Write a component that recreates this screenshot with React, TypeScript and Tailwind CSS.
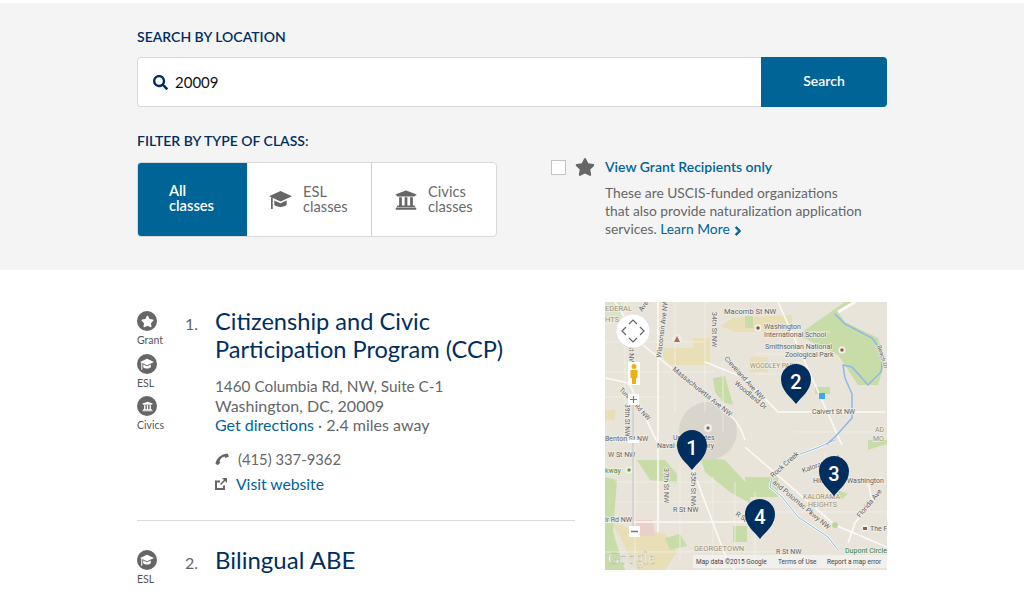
import { FaSearch, FaStar, FaUniversity, FaChevronRight } from "react-icons/fa";

const Label = ({ x, y, r, s = 7.5, c = "#5f5f5f", t }: { x: number; y: number; r?: number; s?: number; c?: string; t: string }) => (
  <text
    x={x}
    y={y}
    fontSize={s}
    fill={c}
    stroke="#f1eee6"
    strokeWidth={1.5}
    paintOrder="stroke"
    transform={r ? `rotate(${r} ${x} ${y})` : undefined}
  >
    {t}
  </text>
);

const Pin = ({ x, y, n }: { x: number; y: number; n: number }) => (
  <g transform={`translate(${x} ${y})`}>
    <path d="M0 40C-5 33 -15 27 -15 15C-15 6.700 -8 0 0 0C8 0 15 6.700 15 15C15 27 5 33 0 40Z" fill="#002f5f" />
    <text x={0} y={25} textAnchor="middle" fontSize={20} fontWeight={500} fill="#fff">
      {n}
    </text>
  </g>
);

const GradCap = ({ size, color = "#666" }: { size: number; color?: string }) => (
  <svg width={size} height={size} viewBox="0 0 24 24" className="shrink-0">
    <path d="M12 3L24 8.500L12 14L0 8.500Z" fill={color} />
    <path d="M5.500 13V17.500C8 20.500 16 20.500 18.500 17.500V13L12 16Z" fill={color} />
    <path d="M3 10V22" stroke={color} strokeWidth={1.8} />
  </svg>
);

const PhoneIcon = () => (
  <svg width={14} height={12} viewBox="0 0 14 12" className="mr-[9px] shrink-0">
    <path d="M0.500 11C1 6 5 1.500 12.500 0.500L14 3.500L10.500 5L9.500 3.500C7 4 5 6 4.500 8.500L5.500 9.500L3 12Z" fill="#666" />
  </svg>
);

const LinkIcon = () => (
  <svg width={12} height={12} viewBox="0 0 12 12" className="mr-[9px] shrink-0">
    <path d="M9 7.500V11H1V3.500H5" fill="none" stroke="#666" strokeWidth={2} />
    <path d="M5.500 6.500L10 2" stroke="#666" strokeWidth={1.6} />
    <path d="M7 0H12V5Z" fill="#666" />
  </svg>
);

const MapBox = () => (
  <svg width={282} height={268} viewBox="0 0 282 268" className="block shrink-0" style={{ fontFamily: "Roboto, sans-serif" }}>
    <rect width={282} height={268} fill="#e8e4da" />
    {/* tan blocks */}
    <path d="M58 46L88 46L88 36L105 36L105 63L65 63L58 56Z" fill="#e9dfb6" />
    <path d="M115 24L128 16L187 13L187 30L140 30L130 30Z" fill="#e9dfb6" />
    <path d="M145 55L163 55L163 70L145 70Z" fill="#e9dfb6" />
    <path d="M0 108L10 108L10 118L0 118Z" fill="#e9dfb6" />
    <path d="M8 222L60 232L72 250L60 268L30 268L18 240Z" fill="#e9dfb6" />
    <path d="M30 218L48 218L50 234L32 234Z" fill="#eacfca" />
    {/* parks */}
    <path d="M193 33L217 16L240 0L250 0L233 10L240 20L273 36L280 60L273 83L253 83L240 63L233 53L207 40Z" fill="#c8dca8" />
    <path d="M140 14L148 14L148 26L140 26Z" fill="#c8dca8" />
    <path d="M108 76L120 74L128 103L118 100L110 90Z" fill="#c8dca8" />
    <path d="M0 0L16 0L16 18L0 14Z" fill="#dbe3c6" />
    <path d="M32 158L60 158L72 172L72 181L45 178Z" fill="#c8dca8" />
    <path d="M95 155L120 158L145 185L145 201L125 190L100 170Z" fill="#c8dca8" />
    <path d="M0 175L12 178L8 230L20 268L0 268Z" fill="#c8dca8" />
    <path d="M140 175L173 175L173 195L142 195Z" fill="#c8dca8" />
    <path d="M128 224L142 224L142 240L128 240Z" fill="#c8dca8" />
    <path d="M60 236L75 232L82 244L65 248Z" fill="#c8dca8" />
    <path d="M210 85L225 85L225 92L210 92Z" fill="#c8dca8" />
    <path d="M263 138L282 138L282 142L263 148Z" fill="#c8dca8" />
    <path d="M230 187L243 192L236 198Z" fill="#c8dca8" />
    {/* grey campus */}
    <circle cx={103} cy={129} r={29} fill="#d9d4cc" />
    {/* streets */}
    <g fill="none" stroke="#f1efe8" strokeWidth={0.8}>
      <path d="M0 40H100M0 70H110M0 95H60M10 180H110M10 200H140M0 250H180M70 0V110M100 0V110M118 60V130M30 130V268M75 160V260M108 175V268M130 180V260M150 190V268" />
      <path d="M160 30H225M150 52H200M150 72H190M190 130H280M170 210H280M220 150V230M20 0V130" />
    </g>
    <g fill="none" stroke="#fbfaf6" strokeWidth={1.6}>
      <path d="M0 76L24 81L52 140" />
      <path d="M10 0L38 43L128 116C134 122 138 132 140 138" />
      <path d="M53 0L53 230" />
      <path d="M0 220L170 220" />
      <path d="M88 168L122 258L130 268" />
      <path d="M140 76L173 110L280 110" />
      <path d="M173 0L237 143" />
      <path d="M100 60L140 76" />
      <path d="M140 145L230 223L282 245" />
      <path d="M263 181L267 198L250 221L243 241" />
      <path d="M233 10L250 0" strokeWidth={3} />
      <path d="M230 138L212 146L187 155L168 171L165 185L177 195L193 215L223 235L233 248" strokeWidth={2.5} />
    </g>
    {/* creek */}
    <g fill="none" stroke="#8db7e8" strokeLinecap="round">
      <path d="M230 12L240 22L267 36C276 46 278 60 276 70L263 83L247 65L238 63L240 76L247 92L247 116L230 135L222 142" strokeWidth={1.5} />
      <path d="M230 138L212 146L187 155L168 171L165 185L177 195L193 215L223 235L233 248" strokeWidth={1} />
    </g>
    <circle cx={230} cy={223} r={3} fill="#bcd69a" />
    <rect x={214} y={91} width={6} height={6} fill="#3aa9ee" />
    {/* place dots */}
    <circle cx={72} cy={37} r={5} fill="#efece4" />
    <path d="M69 40L72 34L75 40Z" fill="#a8705c" />
    <circle cx={103} cy={126} r={4} fill="#f3f0ea" />
    <circle cx={103} cy={126} r={1.7} fill="#8a6a60" />
    <circle cx={153} cy={26} r={3.5} fill="#f5f2ea" />
    <circle cx={153} cy={26} r={1.8} fill="#7c5b4e" />
    <circle cx={237} cy={48} r={3.5} fill="#f5f2ea" />
    <circle cx={237} cy={48} r={1.8} fill="#8a6050" />
    <circle cx={276} cy={179} r={3.5} fill="#f5f2ea" />
    <rect x={274} y={178} width={4} height={2} fill="#a8605a" />
    <circle cx={260} cy={226} r={3.5} fill="#f5f2ea" />
    <rect x={258} y={225} width={4} height={3} fill="#8a6050" />
    <circle cx={24} cy={168} r={3.5} fill="#f5f2ea" />
    <circle cx={24} cy={168} r={1.8} fill="#63a63e" />
    {/* labels */}
    <Label x={0} y={9} t="EDERAL" c="#9a8f6e" />
    <Label x={0} y={20} t="HTS" c="#9a8f6e" />
    <Label x={119} y={12} s={7.5} t="Macomb St NW" />
    <Label x={159} y={27} s={7} t="Washington" />
    <Label x={159} y={35} s={7} t="International School" />
    <Label x={160} y={47} s={7} t="Smithsonian National" />
    <Label x={180} y={55} s={7} t="Zoological Park" />
    <Label x={145} y={66} s={6.5} c="#9a8f6e" t="WOODLEY PARK" />
    <Label x={207} y={112} s={7} t="Calvert St NW" />
    <Label x={270} y={130} s={7} c="#9a8f6e" t="AD" />
    <Label x={268} y={139} s={7} c="#9a8f6e" t="MO" />
    <Label x={56} y={56} s={7} r={-83} t="Wisconsin Ave NW" />
    <Label x={67} y={68} s={7} r={39} t="Massachusetts Ave NW" />
    <Label x={107} y={10} s={7} r={90} t="34th St NW" />
    <Label x={119} y={57} s={7} r={48} t="Cleveland Ave NW" />
    <Label x={129} y={82} s={7} r={40} t="Woodland Dr" />
    <Label x={37} y={10} s={7} r={-55} t="Ave" />
    <Label x={24} y={43} s={7} r={90} t="St NW" />
    <Label x={20} y={102} s={6.5} r={90} t="39th St NW" />
    <Label x={14} y={88} s={6.5} r={47} t="Tunlaw Rd NW" />
    <Label x={0} y={139} s={7} t="Benton St NW" />
    <Label x={68} y={138} s={7} t="United States" />
    <Label x={52} y={146} s={7} t="Naval Observatory" />
    <Label x={3} y={155} s={7} t="W St NW" />
    <Label x={0} y={171} s={7} t="kway" c="#4e8b3a" />
    <Label x={59} y={166} s={7} r={90} t="37th St NW" />
    <Label x={86} y={170} s={7} r={90} t="35th St NW" />
    <Label x={68} y={210} s={7} t="R St NW" />
    <Label x={0} y={220} s={7} t="ir Rd NW" />
    <Label x={130} y={213} s={7} r={35} t="R St" />
    <Label x={89} y={249} s={7.5} c="#9a8f6e" t="GEORGETOWN" />
    <Label x={171} y={252} s={7} t="R St NW" />
    <Label x={168} y={176} s={7} r={-42} t="Rock Creek" />
    <Label x={167} y={181} s={7} r={40} t="and Potomac Pkwy NW" />
    <Label x={198} y={171} s={7} r={-20} t="Kalorama Rd" />
    <Label x={208} y={181} s={7} t="Hill" />
    <Label x={242} y={181} s={7} t="Washington" />
    <Label x={198} y={197} s={7} c="#9a8f6e" t="KALORAMA" />
    <Label x={203} y={205} s={7} c="#9a8f6e" t="HEIGHTS" />
    <Label x={255} y={216} s={7} r={-50} t="Florida Ave" />
    <Label x={265} y={229} s={7} t="The F" />
    <Label x={240} y={251} s={7} c="#2f7d3a" t="Dupont Circle" />
    <Label x={272} y={44} s={6} r={72} t="Beach Dr" />
    {/* map controls */}
    <g>
      <rect x={23} y={60} width={12} height={23} fill="#fff" />
      <path d="M29 62a2.500 2.500 0 1 1 0 5a2.500 2.500 0 1 1 0 -5ZM25.500 68H32.500V76H31V82H27V76H25.500Z" fill="#eeb00f" />
      <circle cx={28} cy={29} r={17} fill="#fff" stroke="#e3e3e3" />
      <path d="M24 22L28 18L32 22M24 36L28 40L32 36M21 25L17 29L21 33M35 25L39 29L35 33" fill="none" stroke="#666" strokeWidth={1.2} />
      <path d="M28 103V224" stroke="#cfcfcf" strokeWidth={1.5} />
      <rect x={23} y={92} width={11} height={11} fill="#fff" />
      <path d="M25 97.500H32M28.500 94V101" stroke="#777" strokeWidth={1.2} />
      <rect x={23} y={138} width={11} height={3} fill="#fff" />
      <rect x={24} y={224} width={11} height={11} fill="#fff" />
      <path d="M26 229.500H33" stroke="#777" strokeWidth={1.5} />
    </g>
    {/* google + attribution */}
    <text x={3} y={262} fontSize={16} fontFamily="Liberation Serif, serif" fill="#fff" stroke="#a8a89e" strokeWidth={0.3}>
      Google
    </text>
    <rect x={88} y={253} width={194} height={13} fill="#f5f5f5" opacity={0.7} />
    <text x={91} y={262} fontSize={6.500} fill="#444">
      Map data ©2015 Google
    </text>
    <text x={173} y={262} fontSize={6.500} fill="#444">
      Terms of Use
    </text>
    <text x={222} y={262} fontSize={6.500} fill="#444">
      Report a map error
    </text>
    <Pin x={87} y={128} n={1} />
    <Pin x={191} y={62} n={2} />
    <Pin x={229} y={154} n={3} />
    <Pin x={155} y={197} n={4} />
  </svg>
);

const Badge = ({ icon, label }: { icon: React.ReactNode; label: string }) => (
  <div className="flex flex-col items-start">
    <div className="flex h-5 w-5 items-center justify-center rounded-full bg-[#666] text-[#fff]">{icon}</div>
    <div className="mt-[3px] text-[10.500px] leading-[13px] text-[#555]">{label}</div>
  </div>
);

export default function App() {
  return (
    <div className="h-[591px] overflow-hidden bg-white pt-[3px] text-[#58595b]" style={{ fontFamily: "Lato, sans-serif" }}>
      <section className="h-[267px] bg-[#f4f4f4] pl-[137px] pr-[137px] pt-[25px]">
        <h2 className="text-[14px] font-semibold leading-[18px] text-[#002f5f]">SEARCH BY LOCATION</h2>
        <div className="mt-[11px] flex h-[50px]">
          <div className="flex flex-1 items-center rounded-l border border-r-0 border-[#d9d9d9] bg-white pl-[15px] text-[15px] text-[#111]">
            <FaSearch className="mr-[7px] text-[15px] text-[#002f5f]" />
            20009
          </div>
          <button className="w-[126px] rounded-r bg-[#006496] pb-[3px] text-[14px] font-semibold text-white">Search</button>
        </div>
        <div className="flex">
          <div className="w-[414px]">
            <h2 className="mt-[25px] text-[14px] font-semibold leading-[18px] text-[#002f5f]">FILTER BY TYPE OF CLASS:</h2>
            <div className="mt-[12px] flex h-[75px] w-[360px] overflow-hidden rounded border border-[#d9d9d9] bg-white text-[14.700px] leading-[15px]">
              <div className="flex w-[109px] flex-col justify-center bg-[#006496] pb-[3px] pl-[31px] font-semibold text-white">
                <span>All</span>
                <span>classes</span>
              </div>
              <div className="flex w-[125px] items-center border-r border-[#cfcfcf] pl-[22px] text-[#6a6a6a]">
                <GradCap size={23} />
                <div className="mb-[2px] ml-[11px]">
                  ESL
                  <br />
                  classes
                </div>
              </div>
              <div className="flex flex-1 items-center pl-[23px] text-[#6a6a6a]">
                <FaUniversity className="mr-[11px] text-[22px] text-[#666]" />
                <div className="mb-[2px]">
                  Civics
                  <br />
                  classes
                </div>
              </div>
            </div>
          </div>
          <div className="flex pt-[44px]">
            <div className="mt-[9px] h-[15px] w-[15px] border border-[#c4c4c4] bg-white" />
            <FaStar className="ml-[9px] mt-[6px] text-[20px] text-[#666]" />
            <div className="ml-[10px] mt-[7px] text-[13.800px] leading-[18px]">
              <div className="text-[14px] font-semibold text-[#006496]">View Grant Recipients only</div>
              <div className="mt-[8px] text-[#666]">
                These are USCIS-funded organizations
                <br />
                that also provide naturalization application
                <br />
                services.{" "}
                <span className="text-[#006496]">
                  Learn More <FaChevronRight className="inline text-[10px]" stroke="currentColor" strokeWidth={50} />
                </span>
              </div>
            </div>
          </div>
        </div>
      </section>

      <main className="flex justify-between pl-[137px] pr-[137px] pt-[32px]">
        <div className="w-[438px]">
          <div className="flex h-[219px] border-b border-[#dcdcdc]">
            <div className="flex w-[48px] flex-col gap-[6.500px] pt-[9px]">
              <Badge icon={<FaStar className="text-[13px]" />} label="Grant" />
              <Badge icon={<GradCap size={14} color="#fff" />} label="ESL" />
              <Badge icon={<FaUniversity className="text-[11px]" />} label="Civics" />
            </div>
            <div className="w-[30px] pt-[12px] text-[16px] leading-[20px] text-[#666]">1.</div>
            <div className="flex-1">
              <h3 className="mt-[5px] text-[23.600px] leading-[28px] text-[#002f5f]">
                Citizenship and Civic
                <br />
                Participation Program (CCP)
              </h3>
              <div className="mt-[13px] text-[16px] leading-[19px] text-[#666]">
                <span className="text-[15.300px]">1460 Columbia Rd, NW, Suite C-1</span>
                <br />
                Washington, DC, 20009
                <br />
                <span className="text-[#006496]">Get directions</span> · 2.4 miles away
              </div>
              <div className="mt-[15px] flex items-center text-[14.800px] leading-[20px] text-[#666]">
                <PhoneIcon />
                (415) 337-9362
              </div>
              <div className="mt-[5px] flex items-center text-[15.700px] leading-[20px] text-[#006496]">
                <LinkIcon />
                Visit website
              </div>
            </div>
          </div>
          <div className="mt-[25px] flex">
            <div className="w-[48px] pt-[4px]">
              <Badge icon={<GradCap size={14} color="#fff" />} label="ESL" />
            </div>
            <div className="w-[30px] pt-[7px] text-[16px] leading-[20px] text-[#666]">2.</div>
            <h3 className="text-[24px] leading-[28px] text-[#002f5f]">Bilingual ABE</h3>
          </div>
        </div>
        <MapBox />
      </main>
    </div>
  );
}
